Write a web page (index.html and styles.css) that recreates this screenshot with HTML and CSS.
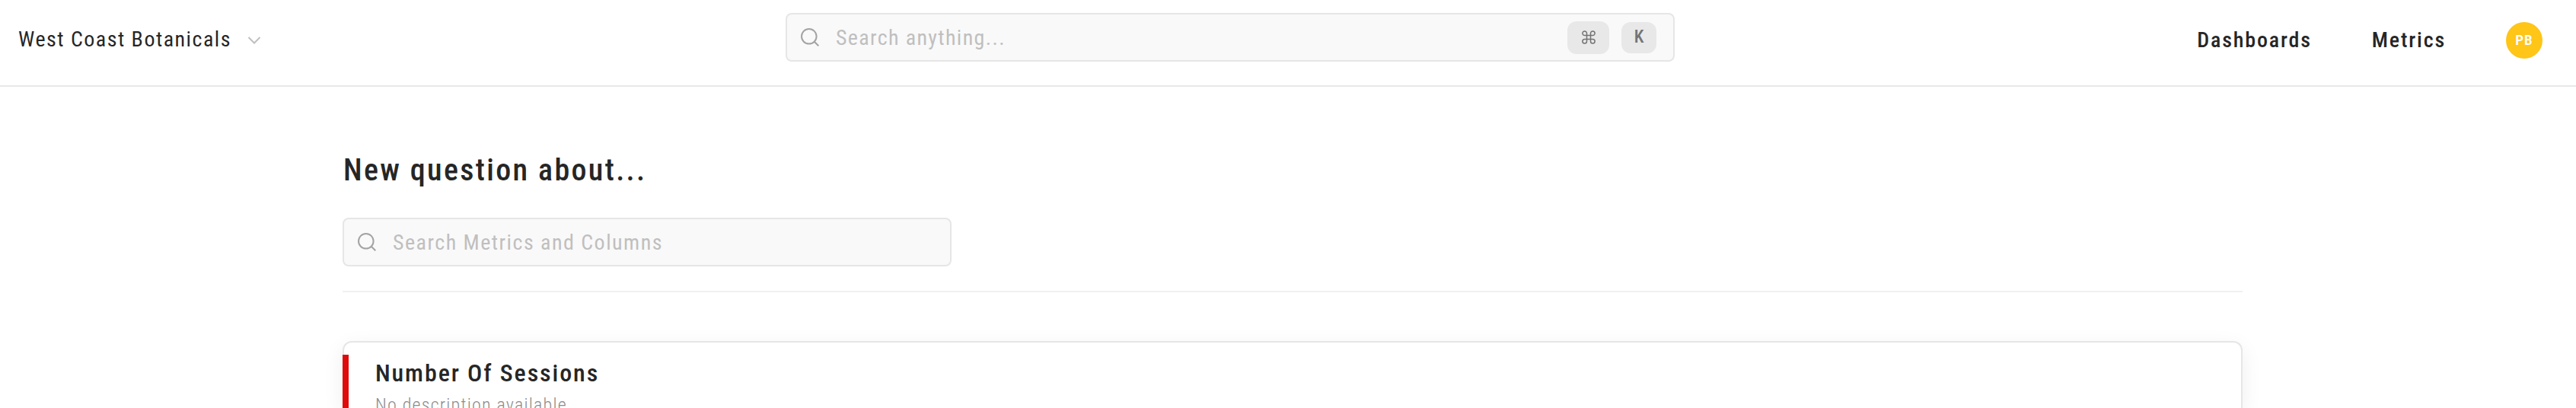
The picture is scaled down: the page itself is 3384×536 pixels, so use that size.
FILE: index.html
```
<!DOCTYPE html>
<html lang="en">
<head>
<meta charset="utf-8">
<title>New question</title>
<link rel="stylesheet" href="styles.css">
</head>
<body>
<header class="topbar">
  <div class="workspace">
    <span class="workspace-name">West Coast Botanicals</span>
    <svg class="chevron" viewBox="0 0 18 10" fill="none" stroke="#bfbfbf" stroke-width="2"><path d="M1.500 1 9 8.500 16.500 1"/></svg>
  </div>
  <div class="search search-global">
    <svg class="search-icon" viewBox="0 0 24 24" fill="none" stroke="#a3a3a3" stroke-width="2"><circle cx="10.800" cy="10.800" r="9.800"/><path d="M17.500 17.500 23.300 23.300"/></svg>
    <span class="placeholder ph-global">Search anything...</span>
    <kbd class="key key-cmd"><svg class="cmd" viewBox="0 0 18 18" fill="none" stroke="#737373" stroke-width="1.500"><path d="M6.500 6.500V3.700A2.800 2.800 0 1 0 3.700 6.500H14.300A2.800 2.800 0 1 0 11.500 3.700V14.300A2.800 2.800 0 1 0 14.300 11.500H3.700A2.800 2.800 0 1 0 6.500 14.300Z"/></svg></kbd>
    <kbd class="key key-k">K</kbd>
  </div>
  <nav class="nav">
    <a class="nav-link">Dashboards</a>
    <a class="nav-link">Metrics</a>
    <span class="avatar">PB</span>
  </nav>
</header>
<main class="content">
  <h1 class="title">New question about...</h1>
  <div class="search search-metrics">
    <svg class="search-icon" viewBox="0 0 24 24" fill="none" stroke="#a3a3a3" stroke-width="2"><circle cx="10.800" cy="10.800" r="9.800"/><path d="M17.500 17.500 23.300 23.300"/></svg>
    <span class="placeholder">Search Metrics and Columns</span>
  </div>
  <hr class="divider">
  <article class="card">
    <h2 class="card-title">Number Of Sessions</h2>
    <p class="card-text">No description available</p>
  </article>
</main>
</body>
</html>
```
FILE: styles.css
```
* { box-sizing: border-box; }
body {
  margin: 0;
  height: 536px;
  overflow: hidden;
  background: #fff;
  color: #262626;
  font-family: "Roboto Condensed", Roboto, sans-serif;
  font-stretch: 75%;
  font-size: 28px;
  line-height: 36px;
  letter-spacing: 1.480px;
  white-space: nowrap;
}
.topbar {
  display: grid;
  grid-template-columns: 1032px 1168px 1fr;
  height: 114px;
  border-bottom: 2px solid #e8e8e8;
}
.workspace {
  display: flex;
  align-items: center;
  height: 36px;
  margin-top: 34px;
  padding-left: 24px;
}
.workspace-name { width: 301px; }
.chevron { width: 18px; height: 10px; margin-top: 1px; }
.search {
  display: flex;
  align-items: center;
  height: 64px;
  padding-left: 18px;
  border: 2px solid #e6e6e6;
  border-radius: 8px;
  background: #f9f9f9;
}
.search-global { margin-top: 17px; padding-right: 22px; }
.search-icon { width: 24px; height: 24px; margin-right: 22px; flex: none; }
.placeholder { padding-top: 1px; color: #bfbfbf; }
.ph-global { flex: 1; letter-spacing: 1.350px; }
.key {
  display: flex;
  align-items: center;
  justify-content: center;
  border-radius: 12px;
  background: #e8e8e8;
  color: #737373;
  font: 500 23px/30px Roboto, sans-serif;
  font-stretch: 75%;
  letter-spacing: 0;
}
.key-cmd { width: 55px; height: 43px; margin-right: 16px; }
.key-k { width: 46px; height: 41px; }
.cmd { width: 18px; height: 18px; }
.nav {
  display: flex;
  align-items: center;
  justify-content: flex-end;
  height: 48px;
  margin-top: 29px;
  padding-right: 44px;
  font-weight: 500;
  letter-spacing: 1.850px;
}
.nav-link { margin-right: 79px; }
.avatar {
  width: 48px;
  height: 48px;
  border-radius: 50%;
  background: #ffc517;
  color: #fff;
  font: 600 19px/48px "Roboto Condensed", Roboto, sans-serif;
  font-stretch: 75%;
  letter-spacing: 1px;
  text-align: center;
}
.content { width: 2496px; margin-left: 450px; padding-top: 86px; }
.title {
  margin: 0 0 38px;
  padding-left: 1px;
  font-size: 40px;
  line-height: 48px;
  font-weight: 500;
  letter-spacing: 2.350px;
}
.search-metrics { width: 800px; }
.divider { margin: 32px 0 64px; border: 0; height: 2px; background: #f0f0f0; }
.card {
  position: relative;
  height: 88px;
  padding: 20px 41px 0;
  border: 2px solid #e6e6e6;
  border-bottom: 0;
  border-radius: 12px 12px 0 0;
  background: #fff;
  box-shadow: 0 8px 28px rgba(0, 0, 0, 0.070);
}
.card::before {
  content: "";
  position: absolute;
  left: -2px;
  top: 16px;
  bottom: 0;
  width: 8px;
  background: #df0b0b;
}
.card-title {
  margin: 0;
  font-size: 32px;
  line-height: 40px;
  font-weight: 500;
  letter-spacing: 1.900px;
}
.card-text {
  margin: 6px 0 0;
  font-size: 24px;
  line-height: 32px;
  font-weight: 300;
  color: #8c8c8c;
  letter-spacing: 1.220px;
}
```
